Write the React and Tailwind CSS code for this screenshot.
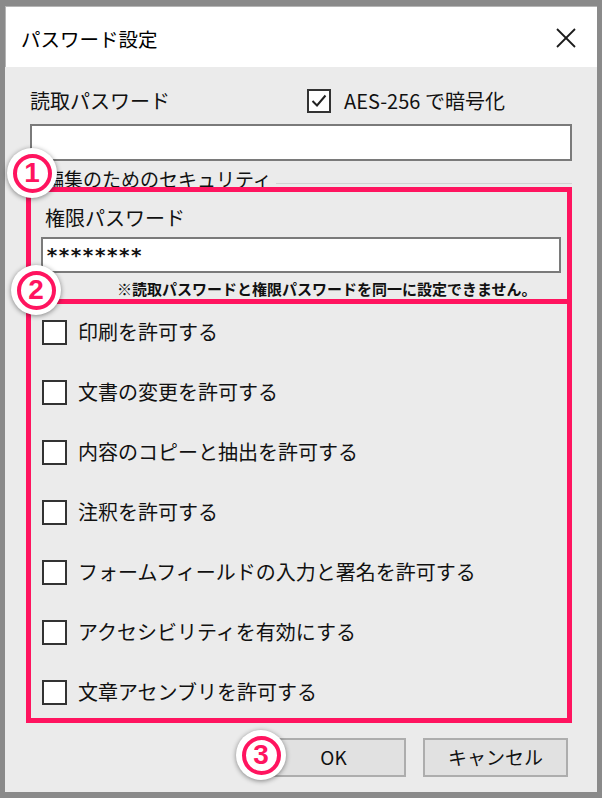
import React from "react";

const JP = { fontFamily: '"Noto Sans CJK JP", "Noto Sans", sans-serif' };

function Box({ checked }) {
  return (
    <div className="w-[25px] h-[25px] shrink-0 border-2 border-[#333333] bg-white flex items-center justify-center">
      {checked && (
        <svg width="19" height="19" viewBox="0 0 19 19">
          <polyline points="2.5,9.5 7,14 16.5,3.5" fill="none" stroke="#222" strokeWidth="2" />
        </svg>
      )}
    </div>
  );
}

function Badge({ n, className }) {
  return (
    <div
      className={
        "absolute w-[50px] h-[50px] rounded-full bg-white flex items-center justify-center shadow-[0_1px_5px_rgba(0,0,0,0.45)] " +
        className
      }
    >
      <div className="w-[39px] h-[39px] rounded-full border-[4px] border-[#ff145f] flex items-center justify-center">
        <span
          className="text-[#ff145f] font-black text-[28px] leading-none"
          style={{ fontFamily: '"Liberation Sans", "DejaVu Sans", sans-serif' }}
        >
          {n}
        </span>
      </div>
    </div>
  );
}

const items = [
  "印刷を許可する",
  "文書の変更を許可する",
  "内容のコピーと抽出を許可する",
  "注釈を許可する",
  "フォームフィールドの入力と署名を許可する",
  "アクセシビリティを有効にする",
  "文章アセンブリを許可する",
];

export default function App() {
  return (
    <div className="relative w-[602px] h-[798px] bg-[#888888] text-[#111111]" style={JP}>
      <div className="absolute inset-0 border-t-[6px] border-l-[5px] border-r-[5px] border-b-[6px] border-[#8a8a8a] flex flex-col">
        {/* title bar */}
        <div className="h-[61px] bg-white flex items-center justify-between pl-[15px] pr-[20px] shrink-0 border-t border-l border-[#b5b5b5]">
          <span className="text-[19.5px] leading-[24px] mt-[4px] text-black">パスワード設定</span>
          <svg width="22" height="22" viewBox="0 0 22 22" className="mt-[2px]">
            <line x1="2" y1="2" x2="20" y2="20" stroke="#1a1a1a" strokeWidth="1.8" />
            <line x1="20" y1="2" x2="2" y2="20" stroke="#1a1a1a" strokeWidth="1.8" />
          </svg>
        </div>

        {/* body */}
        <div className="flex-1 bg-[#ebebeb] px-[25px] pt-[22px] flex flex-col">
          <div className="flex items-center h-[24px]">
            <span className="w-[277px] text-[20px] leading-[24px] whitespace-nowrap">読取パスワード</span>
            <div className="w-[24px] h-[24px] shrink-0 border-2 border-[#333333] bg-white flex items-center justify-center">
              <svg width="18" height="18" viewBox="0 0 18 18">
                <polyline points="2.5,9 7,13.5 15.5,3.5" fill="none" stroke="#222" strokeWidth="2" />
              </svg>
            </div>
            <span className="ml-[13px] text-[20px] leading-[24px] whitespace-nowrap">AES-256 で暗号化</span>
          </div>

          <div className="mt-[11px] h-[37px] border-2 border-[#7a7a7a] bg-white" />

          <div className="flex h-[26px] pl-[15px]">
            <span className="mt-[8px] text-[19px] leading-[20px] whitespace-nowrap">編集のためのセキュリティ</span>
            <div className="flex-1 mt-[22px] ml-[4px] h-px bg-[#d2d2d2]" />
          </div>

          {/* section 1 */}
          <div className="relative -ml-[4px] h-[117px] border-[5px] border-[#ff145f] flex flex-col">
            <span className="pl-[14px] pt-[16px] text-[20px] leading-[20px] whitespace-nowrap">権限パスワード</span>
            <div className="mt-[9px] ml-[10px] mr-[6px] h-[36px] border-2 border-[#7a7a7a] bg-white flex items-center pl-[3px]">
              <span
                className="text-[20px] font-bold leading-none"
                style={{ fontFamily: '"DejaVu Sans Mono", monospace' }}
              >
                ********
              </span>
            </div>
            <span className="mt-[7px] pl-[86px] text-[15px] font-bold leading-[18px] whitespace-nowrap">
              ※読取パスワードと権限パスワードを同一に設定できません。
            </span>
          </div>

          {/* section 2 */}
          <div className="-ml-[4px] h-[419px] border-x-[5px] border-b-[5px] border-[#ff145f] flex flex-col pt-[12px] gap-[28px] pl-[11px]">
            {items.map((t) => (
              <div key={t} className="flex items-center h-[32px]">
                <Box />
                <span className="ml-[11px] text-[20px] leading-[24px] whitespace-nowrap">{t}</span>
              </div>
            ))}
          </div>

          {/* buttons */}
          <div className="mt-[15px] flex justify-end gap-[17px] pr-[4px]">
            <div className="w-[145px] h-[39px] bg-[#e1e1e1] border-2 border-[#adadad] flex items-center justify-center text-[19px]">
              OK
            </div>
            <div className="w-[145px] h-[39px] bg-[#e1e1e1] border-2 border-[#adadad] flex items-center justify-center text-[19px]">
              キャンセル
            </div>
          </div>
        </div>
      </div>

      <Badge n="1" className="left-[7px] top-[148px]" />
      <Badge n="2" className="left-[11px] top-[265px]" />
      <Badge n="3" className="left-[236px] top-[730px]" />
    </div>
  );
}
